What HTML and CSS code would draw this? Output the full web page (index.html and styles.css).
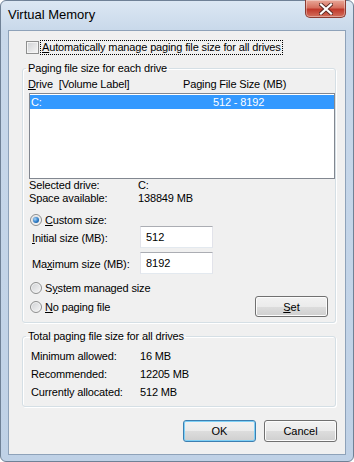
FILE: index.html
```html
<!DOCTYPE html>
<html lang="en">
<head>
    <meta charset="UTF-8">
    <title>Virtual Memory</title>
    <link rel="stylesheet" href="styles.css">
</head>
<body>

<div class="window">
    <!-- caption -->
    <div class="titlebar">
        <span class="title">Virtual Memory</span>
        <span class="close-btn">
            <svg width="14" height="12" viewBox="0 0 14 12">
                <path d="M2 1.5 L12 10.5 M12 1.5 L2 10.5" stroke="#5a2a24" stroke-width="4" stroke-linecap="square"/>
                <path d="M2 1.5 L12 10.5 M12 1.5 L2 10.5" stroke="#ffffff" stroke-width="2.2" stroke-linecap="square"/>
            </svg>
        </span>
    </div>

    <div class="client">
        <label class="auto-row">
            <span class="checkbox"></span>
            <span class="focus-text"><u>A</u>utomatically manage paging file size for all drives</span>
        </label>

        <!-- per drive -->
        <fieldset class="group group-drives">
            <legend>Paging file size for each drive</legend>
            <div class="list-head">
                <span class="col-drive"><u>D</u>rive&nbsp; [Volume Label]</span>
                <span>Paging File Size (MB)</span>
            </div>
            <div class="listbox">
                <div class="list-row selected">
                    <span class="col-letter">C:</span>
                    <span>512 - 8192</span>
                </div>
            </div>
            <div class="info">
                <span>Selected drive:</span><span>C:</span>
                <span>Space available:</span><span>138849 MB</span>
            </div>
            <div class="radio-row custom">
                <span class="radio checked"></span>
                <span><u>C</u>ustom size:</span>
            </div>
            <div class="field">
                <label><u>I</u>nitial size (MB):</label>
                <input type="text" value="512">
            </div>
            <div class="field">
                <label>Ma<u>x</u>imum size (MB):</label>
                <input type="text" value="8192">
            </div>
            <div class="bottom">
                <div class="radios">
                    <div class="radio-row">
                        <span class="radio"></span>
                        <span>S<u>y</u>stem managed size</span>
                    </div>
                    <div class="radio-row">
                        <span class="radio"></span>
                        <span><u>N</u>o paging file</span>
                    </div>
                </div>
                <button class="btn"><u>S</u>et</button>
            </div>
        </fieldset>

        <!-- totals -->
        <fieldset class="group group-total">
            <legend>Total paging file size for all drives</legend>
            <div class="totals">
                <span>Minimum allowed:</span><span>16 MB</span>
                <span>Recommended:</span><span>12205 MB</span>
                <span>Currently allocated:</span><span>512 MB</span>
            </div>
        </fieldset>

        <div class="buttons">
            <button class="btn btn-default">OK</button>
            <button class="btn">Cancel</button>
        </div>
    </div>
</div>

</body>
</html>
```

FILE: styles.css
```css
* {
    box-sizing: border-box;
}

body {
    margin: 0;
    font-family: "Liberation Sans", Arial, sans-serif;
    font-size: 11px;
    letter-spacing: -0.15px;
    color: #000;
}

.window {
    width: 354px;
    height: 462px;
    padding: 0 7px 6px 7px;
    border: 1px solid #6f8196;
    border-radius: 6px;
    background: linear-gradient(#dce7f3, #c8d8ea 30px, #bfd1e6);
    display: flex;
    flex-direction: column;
}

.titlebar {
    height: 29px;
    display: flex;
    justify-content: space-between;
    align-items: flex-start;
}

.title {
    font-size: 13px;
    line-height: 16px;
    margin-top: 6px;
    letter-spacing: 0;
    color: #000;
}

.close-btn {
    width: 41px;
    height: 18px;
    margin-top: -1px;
    display: flex;
    align-items: center;
    justify-content: center;
    border: 1px solid #8b3b31;
    border-top: none;
    border-radius: 0 0 5px 5px;
    background: linear-gradient(#e9a898, #d6705f 45%, #c0392b 55%, #d3705d);
    box-shadow: inset 0 0 0 1px rgba(255,255,255,0.35);
}

.client {
    flex: 1;
    background: #f0f0f0;
    border: 1px solid #8ea2b9;
    padding: 9px 8px 0 13px;
}

.auto-row {
    display: flex;
    align-items: center;
    height: 15px;
    margin-left: 4px;
}

.checkbox {
    width: 13px;
    height: 13px;
    border: 1px solid #8e8f8f;
    background: linear-gradient(135deg, #cfd1d4, #f6f6f6);
    box-shadow: inset 0 0 0 1px #f4f4f4;
}

.focus-text {
    margin-left: 1px;
    padding: 0 1px;
    line-height: 13px;
    border: 1px dotted #000;
}

.group {
    margin: 7px 0 0 0;
    padding: 0 0 5px 0;
    width: 314px;
    min-width: 0;
    border: 1px solid #d5dfe5;
    border-radius: 3px;
    box-shadow: inset 1px 1px 0 #fff, 1px 1px 0 #fff;
}

.group legend {
    padding: 0 2px;
    margin-left: 3px;
    line-height: 13px;
}

.list-head {
    display: flex;
    margin-top: 3px;
    padding-left: 5px;
    line-height: 13px;
}

.col-drive {
    width: 155px;
}

.listbox {
    margin: 2px 0 0 6px;
    width: 306px;
    height: 86px;
    border: 1px solid #828790;
    background: #fff;
    padding-top: 1px;
}

.list-row {
    display: flex;
    height: 14px;
    line-height: 14px;
    padding-left: 1px;
}

.list-row.selected {
    background: #3399ff;
    color: #fff;
}

.col-letter {
    width: 182px;
}

.info {
    display: grid;
    grid-template-columns: 109px auto;
    padding-left: 6px;
    line-height: 13px;
}

.radio-row {
    display: flex;
    align-items: center;
    height: 14px;
    gap: 3px;
}

.radio-row.custom {
    height: 12px;
    margin-top: 9px;
    padding-left: 7px;
}

.radio {
    width: 12px;
    height: 12px;
    border-radius: 50%;
    border: 1px solid #8e8f8f;
    background: linear-gradient(135deg, #cfd1d4, #f7f7f7);
    box-shadow: inset 0 0 0 1px #f4f4f4;
    display: flex;
    align-items: center;
    justify-content: center;
}

.radio.checked::after {
    content: "";
    width: 6px;
    height: 6px;
    border-radius: 50%;
    background: radial-gradient(circle at 35% 35%, #a8d6fb, #2a78c2 55%, #0f4f8f);
}

.field {
    display: flex;
    height: 22px;
    padding-left: 9px;
}

.field + .field {
    margin-top: 4px;
}

.field label {
    width: 108px;
    line-height: 13px;
    padding-top: 6px;
}

.field input {
    width: 73px;
    height: 22px;
    margin: 0;
    padding: 0 5px;
    font: inherit;
    border: 1px solid;
    border-color: #abadb3 #e2e3ea #e3e9ef #e2e3ea;
    background: #fff;
    outline: none;
}

.bottom {
    display: flex;
    justify-content: space-between;
    align-items: flex-end;
    padding: 0 7px;
}

.radios {
    display: flex;
    flex-direction: column;
    gap: 5px;
    margin: 7px 0 3px 0;
}

.btn {
    width: 73px;
    height: 21px;
    padding: 0;
    font: inherit;
    color: #000;
    border: 1px solid #707070;
    border-radius: 3px;
    background: linear-gradient(#f2f2f2, #ebebeb 50%, #dddddd 50%, #cfcfcf);
    box-shadow: inset 0 0 0 1px #fcfcfc;
}

.group-total .totals {
    display: grid;
    grid-template-columns: 109px auto;
    padding: 4px 0 0 8px;
    line-height: 18px;
}

.buttons {
    display: flex;
    justify-content: flex-end;
    gap: 8px;
    margin-top: 13px;
}

.buttons .btn {
    height: 22px;
}

.btn-default {
    border-color: #3c7fb1;
    box-shadow: inset 0 0 0 1px #7fd0f6;
}
```
